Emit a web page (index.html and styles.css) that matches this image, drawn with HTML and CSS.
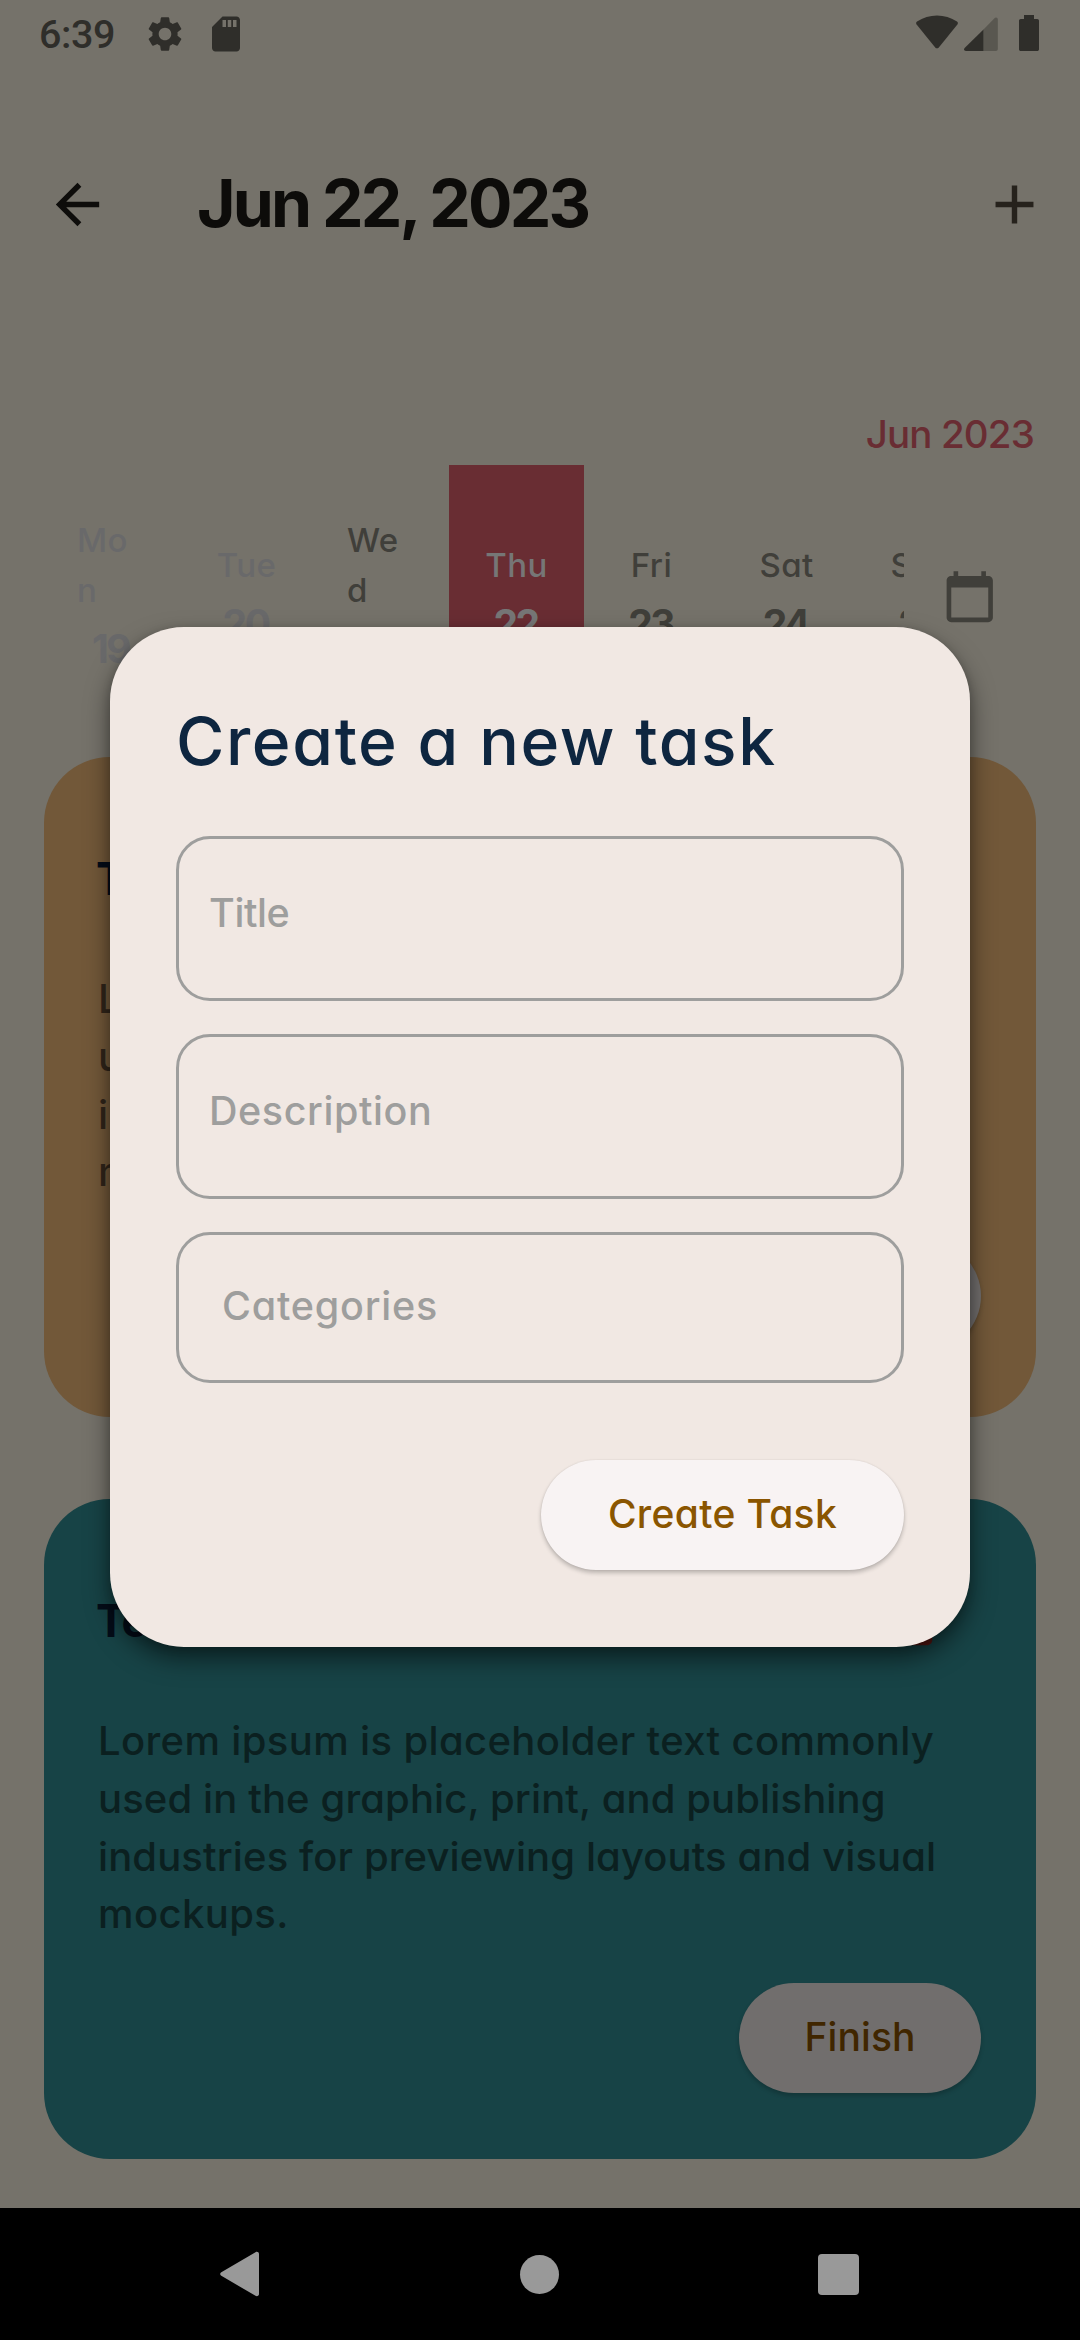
FILE: index.html
```html
<!DOCTYPE html>
<html lang="en">
<head>
<meta charset="utf-8">
<title>Tasks</title>
<link rel="stylesheet" href="styles.css">
</head>
<body>
<div class="screen">
  <div class="status">
    <span class="clock">6:39</span>
    <svg class="gear" viewBox="0 0 24 24" width="42" height="42"><path d="M19.14 12.94c.04-.3.06-.61.06-.94 0-.32-.02-.64-.07-.94l2.03-1.58c.18-.14.23-.41.12-.61l-1.92-3.32c-.12-.22-.37-.29-.59-.22l-2.39.96c-.5-.38-1.03-.7-1.62-.94l-.36-2.54c-.04-.24-.24-.41-.48-.41h-3.84c-.24 0-.43.17-.47.41l-.36 2.54c-.59.24-1.13.57-1.62.94l-2.39-.96c-.22-.08-.47 0-.59.22L2.74 8.87c-.12.21-.08.47.12.61l2.03 1.58c-.05.3-.09.63-.09.94s.02.64.07.94l-2.03 1.58c-.18.14-.23.41-.12.61l1.92 3.32c.12.22.37.29.59.22l2.39-.96c.5.38 1.03.7 1.62.94l.36 2.54c.05.24.24.41.48.41h3.84c.24 0 .44-.17.47-.41l.36-2.54c.59-.24 1.13-.56 1.62-.94l2.39.96c.22.08.47 0 .59-.22l1.92-3.32c.12-.22.07-.47-.12-.61l-2.01-1.58zM12 15.6c-1.98 0-3.6-1.62-3.6-3.6s1.62-3.6 3.6-3.6 3.6 1.62 3.6 3.6-1.62 3.6-3.6 3.6z"/></svg>
    <svg class="sd" viewBox="0 0 24 24" width="42" height="42"><path d="M18 2h-8L4.02 8 4 20c0 1.100.9 2 2 2h12c1.100 0 2-.9 2-2V4c0-1.100-.9-2-2-2zm-6 6h-2V4h2v4zm3 0h-2V4h2v4zm3 0h-2V4h2v4z"/></svg>
    <span class="spacer"></span>
    <svg class="wifi" viewBox="0 0 42 34" width="42" height="34"><path d="M1 6.500C7 2.500 14 .5 21 .5s14 2 20 6c1 .8 1.200 1.800.4 2.900L22.800 32.400c-1 1.200-2.600 1.200-3.600 0L.6 9.400C-.2 8.300 0 7.300 1 6.500z"/></svg>
    <svg class="signal" viewBox="0 0 34 34" width="34" height="34"><path class="faint" d="M19.500 34V12.500L30.500 1.200c1.300-1.300 3.300-.5 3.300 1.200V32c0 1.200-.8 2-2 2z"/><path d="M19.500 12.500V34H2C.2 34-.6 32.300.6 31z"/></svg>
    <svg class="battery" viewBox="0 0 20 36" width="20" height="36"><path d="M5 0h10v4h3.200c1 0 1.800.8 1.800 1.800v28.400c0 1-.8 1.800-1.800 1.800H1.800C.8 36 0 35.200 0 34.200V5.800C0 4.800.8 4 1.800 4H5z"/></svg>
  </div>

  <div class="header">
    <svg class="back" viewBox="0 0 24 24" width="65" height="65"><path d="M20 11H7.830l5.590-5.590L12 4l-8 8 8 8 1.410-1.410L7.830 13H20v-2z"/></svg>
    <h1 class="date">Jun 22, 2023</h1>
    <svg class="add" viewBox="0 0 24 24" width="65" height="65"><path d="M19 13h-6v6h-2v-6H5v-2h6V5h2v6h6v2z"/></svg>
  </div>

  <div class="month">Jun 2023</div>

  <div class="week">
    <div class="days">
      <div class="day past"><span class="name wrap">Mo<br>n</span><span class="num">19</span></div>
      <div class="day past"><span class="name">Tue</span><span class="num">20</span></div>
      <div class="day"><span class="name wrap">We<br>d</span><span class="num">21</span></div>
      <div class="day selected"><span class="name">Thu</span><span class="num">22</span></div>
      <div class="day"><span class="name">Fri</span><span class="num">23</span></div>
      <div class="day"><span class="name">Sat</span><span class="num">24</span></div>
      <div class="day"><span class="name">Sun</span><span class="num">25</span></div>
    </div>
    <div class="picker">
      <svg viewBox="0 0 24 24" width="55.500" height="55.500"><path d="M20 3h-1V1h-2v2H7V1H5v2H4c-1.100 0-2 .9-2 2v16c0 1.100.9 2 2 2h16c1.100 0 2-.9 2-2V5c0-1.100-.9-2-2-2zm0 18H4V8h16v13z"/></svg>
    </div>
  </div>

  <div class="cards">
    <div class="card amber">
      <div class="card-head"><h2 class="card-title">Test</h2>
        <span class="delete"><svg viewBox="0 0 24 24" width="63" height="63"><path d="M6 19c0 1.100.9 2 2 2h8c1.100 0 2-.9 2-2V7H6v12zM19 4h-3.500l-1-1h-5l-1 1H5v2h14V4z"/></svg></span></div>
      <p class="text"><span class="line first">Lorem ipsum is placeholder text commonly</span><span class="line">used in the graphic, print, and publishing</span><span class="line">industries for previewing layouts and visual</span><span class="line last">mockups.</span></p>
      <span class="btn finish">Finish</span>
    </div>
    <div class="card teal">
      <div class="card-head"><h2 class="card-title">Test</h2>
        <span class="delete"><svg viewBox="0 0 24 24" width="63" height="63"><path d="M6 19c0 1.100.9 2 2 2h8c1.100 0 2-.9 2-2V7H6v12zM19 4h-3.500l-1-1h-5l-1 1H5v2h14V4z"/></svg></span></div>
      <p class="text"><span class="line first">Lorem ipsum is placeholder text commonly</span><span class="line">used in the graphic, print, and publishing</span><span class="line">industries for previewing layouts and visual</span><span class="line last">mockups.</span></p>
      <span class="btn finish">Finish</span>
    </div>
  </div>

  <div class="navbar">
    <svg viewBox="0 0 40 46" width="40" height="46"><path d="M35.500 1.200 1.300 21.200c-1.500 1-1.500 2.600 0 3.600l34.200 20c1.500.9 3.500.1 3.500-1.800V3c0-1.900-2-2.700-3.500-1.800z"/></svg>
    <span class="home"></span>
    <span class="recent"></span>
  </div>

  <div class="dialog">
    <h2 class="dialog-title">Create a new task</h2>
    <div class="field"><span class="hint title-hint">Title</span></div>
    <div class="field"><span class="hint">Description</span></div>
    <div class="field select"><span class="hint categories">Categories</span></div>
    <span class="btn create">Create Task</span>
  </div>
</div>
</body>
</html>
```
FILE: styles.css
```css
* { box-sizing: border-box; }
body { margin: 0; background: #75726a; }
h1, h2, p { margin: 0; }
svg { display: block; flex: none; }

.screen {
  position: relative;
  display: flex;
  flex-direction: column;
  width: 1080px;
  height: 2340px;
  overflow: hidden;
  background: #75726a;
  font-family: Inter, "Open Sans", sans-serif;
  font-feature-settings: "cv11";
  font-weight: 500;
  white-space: nowrap;
}

/* Status bar */
.status { display: flex; align-items: center; height: 66px; padding: 0 41px 0 39px; fill: #2f2e2a; }
.clock { font: 500 39.500px/46px Roboto, sans-serif; color: #2f2e2a; margin-top: 3px; width: 104.500px; letter-spacing: -0.400px; }
.gear, .sd { margin-top: 1px; }
.sd { margin-left: 19px; }
.spacer { flex: 1; }
.wifi { margin-top: -2px; }
.signal { margin: 1px 21px 0 6px; }
.faint { fill: #595750; }

/* Header */
.header { display: flex; align-items: center; height: 156px; margin-top: 60px; padding: 0 33.500px 0 45px; }
.back { fill: #0e0d0b; }
.date { flex: 1; margin: -3px 0 0 87px; font-size: 66px; font-weight: 700; line-height: 90px; letter-spacing: -2.850px; color: #0d0c0a; }
.add { fill: #26221c; }
.month { margin-top: 123px; padding-right: 46px; text-align: right; font-size: 38.500px; line-height: 58px; letter-spacing: -0.850px; color: #692d33; }

/* Week strip */
.week { display: flex; height: 264px; margin: 2px 44px 0; }
.days { display: flex; width: 860px; overflow: hidden; }
.day { flex: none; display: flex; flex-direction: column; align-items: center; justify-content: center; width: 135px; color: #403f3a; }
.name { font-size: 33px; line-height: 50px; font-weight: 450; letter-spacing: .4px; }
.name.wrap { width: 69px; }
.num { margin-top: 4px; font-size: 39px; line-height: 60px; font-weight: 700; letter-spacing: -2.500px; padding-right: 2px; }
.past { color: #69696a; }
.selected { background: #692d33; color: #767676; }
.picker { display: flex; flex: 1; align-items: center; justify-content: center; fill: #403f3a; }

/* Task cards */
.cards { display: flex; flex-direction: column; gap: 82px; padding: 28px 44px 0; }
.card { display: flex; flex-direction: column; height: 660px; padding: 59px 55px 0 54px; border-radius: 66px; }
.amber { background: #725839; }
.teal { background: #174346; }
.card-head { display: flex; align-items: center; justify-content: space-between; height: 126px; }
.card-title { margin-left: -2px; font-size: 45px; font-weight: 700; line-height: 66px; letter-spacing: -1px; color: #040c18; }
.delete { display: flex; justify-content: center; width: 130px; fill: #5a1712; }
.text { margin-top: 28px; font-size: 40px; line-height: 57.750px; }
.line { display: block; letter-spacing: .110px; }
.line.first { letter-spacing: .360px; }
.line.last { letter-spacing: .400px; }
.amber .text { color: #30251a; }
.teal .text { color: #0b2020; }

.btn { align-self: flex-end; display: flex; align-items: center; justify-content: center; height: 110px; border-radius: 55px; font-size: 39px; padding-bottom: 3px; }
.finish { width: 242px; margin-top: 40px; background: #716e6d; color: #402600; letter-spacing: .1px; box-shadow: 0 3px 4px rgba(0, 0, 0, .2); }

/* System navigation */
.navbar { display: flex; align-items: center; justify-content: space-between; height: 132px; margin-top: auto; padding: 0 221px 0 220px; background: #000; fill: #999; }
.home { width: 39px; height: 39px; border-radius: 50%; background: #999; }
.recent { width: 41px; height: 41px; border-radius: 4px; background: #999; }

/* Dialog over the task list */
.dialog {
  position: absolute;
  left: 110px;
  top: 627px;
  display: flex;
  flex-direction: column;
  width: 860px;
  height: 1020px;
  padding: 66px;
  border-radius: 74px;
  background: #f1e8e3;
  box-shadow: 0 12px 24px rgba(0, 0, 0, .5), 0 2px 8px rgba(0, 0, 0, .15);
}
.dialog-title { margin-bottom: 47px; font-size: 66px; font-weight: 500; line-height: 96px; letter-spacing: 1.600px; color: #0e2640; }
.field { display: flex; align-items: center; height: 165px; margin-bottom: 33px; padding: 0 29px 11px 30px; border: 3px solid #9e9e9d; border-radius: 34px; }
.select { height: 151px; margin-bottom: 77px; padding: 0 43px 3px; }
.hint { font-size: 39.500px; letter-spacing: .580px; color: #9e9e9d; }
.title-hint { letter-spacing: -.4px; }
.categories { letter-spacing: .8px; }
.create { width: 363px; background: #f8f3f3; color: #8a5500; letter-spacing: .340px; box-shadow: 0 3px 4px rgba(0, 0, 0, .22), 0 0 2px rgba(0, 0, 0, .1); }
```
